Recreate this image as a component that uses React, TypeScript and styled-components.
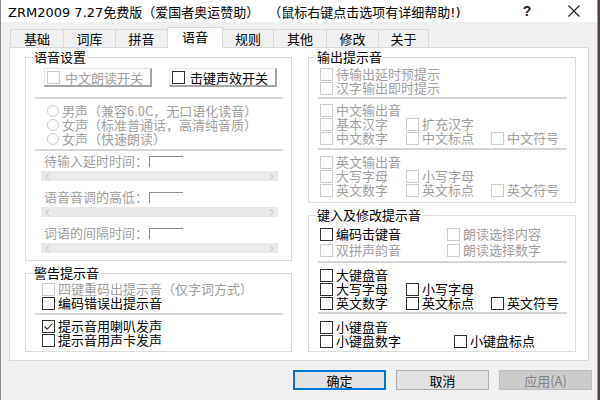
import React from "react";
import styled, { createGlobalStyle } from "styled-components";

const Global = createGlobalStyle`
  html, body { margin: 0; padding: 0; }
  body {
    width: 600px; height: 400px; overflow: hidden;
    background: #4d4046;
    font-family: "Noto Sans CJK SC", sans-serif;
  }
`;

const Window = styled.div`
  width: 598px;
  height: 400px;
  box-sizing: border-box;
  background: #f0f0f0;
  border-left: 1px solid #8a8a8a;
  border-right: 1px solid #9a9a9a;
  display: flex;
  flex-direction: column;
`;

const TitleBar = styled.div`
  height: 22px;
  flex: 0 0 22px;
  background: #ffffff;
  display: flex;
  align-items: center;
  padding-left: 7px;
  font-family: "DejaVu Sans", "Noto Sans CJK SC", sans-serif;
  font-size: 13px;
  color: #000;
`;

const TitleText = styled.div`
  flex: 1;
  white-space: nowrap;
  display: flex;
  gap: 9px;
`;

const CaptionButton = styled.div<{ $w: number }>`
  width: ${(p) => p.$w}px;
  height: 22px;
  display: flex;
  align-items: center;
  justify-content: center;
  font-family: "Liberation Sans", sans-serif;
  font-size: 14px;
  font-weight: bold;
  color: #222;
`;

const Body = styled.div`
  padding: 0 8px;
  display: flex;
  flex-direction: column;
`;

const TabStrip = styled.div`
  height: 25px;
  display: flex;
  align-items: flex-end;
  padding-left: 1px;
`;

const Tab = styled.div<{ $active?: boolean; $w: number }>`
  width: ${(p) => p.$w}px;
  box-sizing: border-box;
  height: ${(p) => (p.$active ? 21 : 18)}px;
  margin-bottom: ${(p) => (p.$active ? -1 : 0)}px;
  margin-left: -1px;
  &:first-child { margin-left: 0; }
  padding-bottom: ${(p) => (p.$active ? 4 : 0)}px;
  border: 1px solid #d9d9d9;
  border-bottom: none;
  background: ${(p) => (p.$active ? "#ffffff" : "#f0f0f0")};
  position: relative;
  z-index: ${(p) => (p.$active ? 2 : 1)};
  display: flex;
  align-items: center;
  justify-content: center;
  font-size: 13px;
  color: #000;
`;

const Panel = styled.div`
  height: 314px;
  box-sizing: border-box;
  border: 1px solid #d9d9d9;
  background: #ffffff;
  padding: 9px 12px 8px 15px;
  display: grid;
  grid-template-columns: 267px 268px;
  column-gap: 16px;
`;

const Column = styled.div`
  display: flex;
  flex-direction: column;
  gap: 12px;
  min-height: 0;
`;

const GroupBox = styled.div<{ $grow?: boolean; $pt: number; $pb: number; $pl: number }>`
  position: relative;
  border: 1px solid #dcdcdc;
  flex: ${(p) => (p.$grow ? "1 1 auto" : "0 0 auto")};
  padding: ${(p) => p.$pt}px 0 ${(p) => p.$pb}px ${(p) => p.$pl}px;
  display: flex;
  flex-direction: column;
`;

const GroupTitle = styled.span`
  position: absolute;
  top: -8px;
  left: 7px;
  padding: 0 1px;
  background: #ffffff;
  font-size: 13px;
  line-height: 14px;
  color: #000;
`;

const Sep = styled.div<{ $mt: number; $mb: number; $inset: number }>`
  height: 2px;
  background: #d6d6d6;
  margin: ${(p) => p.$mt}px 8px ${(p) => p.$mb}px ${(p) => 9 - p.$inset}px;
`;

const Row = styled.div<{ $h?: number }>`
  height: ${(p) => p.$h ?? 14}px;
  display: flex;
  align-items: center;
`;

const Grid = styled.div<{ $cols: string; $h?: number }>`
  display: grid;
  grid-template-columns: ${(p) => p.$cols};
  grid-auto-rows: ${(p) => p.$h ?? 14}px;
`;

const CheckLabel = styled.div<{ $dis?: boolean }>`
  display: flex;
  align-items: center;
  gap: 3px;
  font-size: 13px;
  line-height: 14px;
  white-space: nowrap;
  color: ${(p) => (p.$dis ? "#a0a0a0" : "#000")};
`;

const Box = styled.span<{ $dis?: boolean }>`
  width: 13px;
  height: 13px;
  box-sizing: border-box;
  flex: 0 0 13px;
  border: 1px solid ${(p) => (p.$dis ? "#cccccc" : "#333333")};
  background: #ffffff;
  display: flex;
  align-items: center;
  justify-content: center;
`;

const Circle = styled.span`
  width: 12px;
  height: 12px;
  box-sizing: border-box;
  border: 1px solid #cdcdcd;
  border-radius: 50%;
  background: #fff;
  flex: 0 0 12px;
`;

const ToggleRow = styled.div`
  margin-top: 10px;
  padding-left: 18px;
  display: flex;
  gap: 17px;
`;

const ToggleButton = styled.div<{ $dis?: boolean }>`
  width: 108px;
  height: 19px;
  box-sizing: border-box;
  background: #ffffff;
  border-top: 1px solid #e6e6e6;
  border-left: 1px solid #e6e6e6;
  border-right: 2px solid #a5a5a5;
  border-bottom: 2px solid #a5a5a5;
  padding-left: 2px;
  display: flex;
  align-items: center;
  gap: 5px;
  font-size: 13px;
  color: ${(p) => (p.$dis ? "#a0a0a0" : "#000")};
`;

const RadioRow = styled.div`
  height: 14px;
  padding-left: 21px;
  display: flex;
  align-items: center;
  gap: 3px;
  font-size: 13px;
  line-height: 14px;
  color: #a0a0a0;
  white-space: nowrap;
`;

const SliderLabel = styled.div<{ $mt: number }>`
  margin-top: ${(p) => p.$mt}px;
  height: 14px;
  padding-left: 18px;
  display: flex;
  align-items: flex-start;
  font-size: 13px;
  line-height: 14px;
  color: #a0a0a0;
  white-space: nowrap;
`;

const EditBox = styled.span`
  width: 33px;
  height: 10px;
  margin-top: 2px;
  margin-left: 1px;
  border-top: 1px solid #8c8c8c;
  border-left: 1px solid #8c8c8c;
`;

const ScrollTrack = styled.div`
  height: 10px;
  margin: 3px 13px 0 15px;
  background: #e9e9e9;
  display: flex;
  align-items: center;
  justify-content: space-between;
  padding: 0 4px;
`;

const ButtonRow = styled.div`
  margin-top: 9px;
  margin-right: -3px;
  display: flex;
  justify-content: flex-end;
  gap: 10px;
`;

const DlgButton = styled.div<{ $kind?: "primary" | "disabled" }>`
  width: 93px;
  height: 20px;
  box-sizing: border-box;
  display: flex;
  align-items: center;
  justify-content: center;
  font-size: 13px;
  background: ${(p) => (p.$kind === "disabled" ? "#cccccc" : "#e1e1e1")};
  border: 1px solid
    ${(p) => (p.$kind === "primary" ? "#0078d7" : p.$kind === "disabled" ? "#bfbfbf" : "#adadad")};
  box-shadow: ${(p) => (p.$kind === "primary" ? "inset 0 0 0 1px #0078d7" : "none")};
  color: ${(p) => (p.$kind === "disabled" ? "#838383" : "#000")};
`;

const Check = ({ label, dis, checked }: { label: string; dis?: boolean; checked?: boolean }) => (
  <CheckLabel $dis={dis}>
    <Box $dis={dis}>
      {checked && (
        <svg width="11" height="11" viewBox="0 0 11 11">
          <path d="M1.5 5.5 L4.2 8.2 L9.5 2.5" fill="none" stroke="#333" strokeWidth="1.1" />
        </svg>
      )}
    </Box>
    {label}
  </CheckLabel>
);

const Chevron = ({ dir }: { dir: "l" | "r" }) => (
  <svg width="5" height="7" viewBox="0 0 5 7">
    <path d={dir === "l" ? "M4 0.5 L1 3.5 L4 6.5" : "M1 0.5 L4 3.5 L1 6.5"} fill="none" stroke="#b5b5b5" strokeWidth="1" />
  </svg>
);

const Slider = ({ label, mt }: { label: string; mt: number }) => (
  <>
    <SliderLabel $mt={mt}>
      {label}
      <EditBox />
    </SliderLabel>
    <ScrollTrack>
      <Chevron dir="l" />
      <Chevron dir="r" />
    </ScrollTrack>
  </>
);

const tabs: [string, number][] = [
  ["基础", 54],
  ["词库", 53],
  ["拼音", 53],
  ["语音", 56],
  ["规则", 52],
  ["其他", 54],
  ["修改", 53],
  ["关于", 51],
];

export default function App() {
  return (
    <>
      <Global />
      <Window>
        <TitleBar>
          <TitleText>
            <span>ZRM2009 7.27免费版（爱国者奥运赞助）</span>
            <span>（鼠标右键点击选项有详细帮助!)</span>
          </TitleText>
          <CaptionButton $w={48}>?</CaptionButton>
          <CaptionButton $w={46}>
            <svg width="12" height="12" viewBox="0 0 12 12">
              <path d="M0.5 0.5 L11.5 11.5 M11.5 0.5 L0.5 11.5" stroke="#222" strokeWidth="1.1" />
            </svg>
          </CaptionButton>
        </TitleBar>
        <Body>
          <TabStrip>
            {tabs.map(([t, w]) => (
              <Tab key={t} $w={w} $active={t === "语音"}>
                {t}
              </Tab>
            ))}
          </TabStrip>
          <Panel>
            <Column>
              <GroupBox $pt={0} $pb={7} $pl={0}>
                <GroupTitle>语音设置</GroupTitle>
                <ToggleRow>
                  <ToggleButton $dis>
                    <Box $dis />
                    中文朗读开关
                  </ToggleButton>
                  <ToggleButton>
                    <Box />
                    击键声效开关
                  </ToggleButton>
                </ToggleRow>
                <Sep $mt={10} $mb={5} $inset={0} />
                <RadioRow>
                  <Circle />
                  男声（兼容6.0C，无口语化读音）
                </RadioRow>
                <RadioRow>
                  <Circle />
                  女声（标准普通话，高清纯音质）
                </RadioRow>
                <RadioRow>
                  <Circle />
                  女声（快速朗读）
                </RadioRow>
                <Sep $mt={3} $mb={0} $inset={0} />
                <Slider label="待输入延时时间：" mt={3} />
                <Slider label="语音音调的高低：" mt={9} />
                <Slider label="词语的间隔时间：" mt={9} />
              </GroupBox>
              <GroupBox $grow $pt={8} $pb={0} $pl={16}>
                <GroupTitle>警告提示音</GroupTitle>
                <Row>
                  <Check dis label="四键重码出提示音（仅字词方式）" />
                </Row>
                <Row>
                  <Check label="编码错误出提示音" />
                </Row>
                <Sep $mt={3} $mb={4} $inset={16} />
                <Row>
                  <Check checked label="提示音用喇叭发声" />
                </Row>
                <Row>
                  <Check label="提示音用声卡发声" />
                </Row>
              </GroupBox>
            </Column>
            <Column>
              <GroupBox $pt={9} $pb={5} $pl={11}>
                <GroupTitle>输出提示音</GroupTitle>
                <Row>
                  <Check dis label="待输出延时预提示" />
                </Row>
                <Row>
                  <Check dis label="汉字输出即时提示" />
                </Row>
                <Sep $mt={2} $mb={4} $inset={11} />
                <Grid $cols="86px 85px 1fr">
                  <Check dis label="中文输出音" />
                  <span />
                  <span />
                  <Check dis label="基本汉字" />
                  <Check dis label="扩充汉字" />
                  <span />
                  <Check dis label="中文数字" />
                  <Check dis label="中文标点" />
                  <Check dis label="中文符号" />
                </Grid>
                <Sep $mt={3} $mb={5} $inset={11} />
                <Grid $cols="86px 85px 1fr">
                  <Check dis label="英文输出音" />
                  <span />
                  <span />
                  <Check dis label="大写字母" />
                  <Check dis label="小写字母" />
                  <span />
                  <Check dis label="英文数字" />
                  <Check dis label="英文标点" />
                  <Check dis label="英文符号" />
                </Grid>
              </GroupBox>
              <GroupBox $grow $pt={10} $pb={0} $pl={11}>
                <GroupTitle>键入及修改提示音</GroupTitle>
                <Grid $cols="127px 1fr" $h={16}>
                  <Check label="编码击键音" />
                  <Check dis label="朗读选择内容" />
                  <Check dis label="双拼声韵音" />
                  <Check dis label="朗读选择数字" />
                </Grid>
                <Sep $mt={3} $mb={5} $inset={11} />
                <Grid $cols="86px 85px 1fr">
                  <Check label="大键盘音" />
                  <span />
                  <span />
                  <Check label="大写字母" />
                  <Check label="小写字母" />
                  <span />
                  <Check label="英文数字" />
                  <Check label="英文标点" />
                  <Check label="英文符号" />
                </Grid>
                <Sep $mt={2} $mb={6} $inset={11} />
                <Grid $cols="134px 1fr">
                  <Check label="小键盘音" />
                  <span />
                  <Check label="小键盘数字" />
                  <Check label="小键盘标点" />
                </Grid>
              </GroupBox>
            </Column>
          </Panel>
          <ButtonRow>
            <DlgButton $kind="primary">确定</DlgButton>
            <DlgButton>取消</DlgButton>
            <DlgButton $kind="disabled">应用(A)</DlgButton>
          </ButtonRow>
        </Body>
      </Window>
    </>
  );
}
